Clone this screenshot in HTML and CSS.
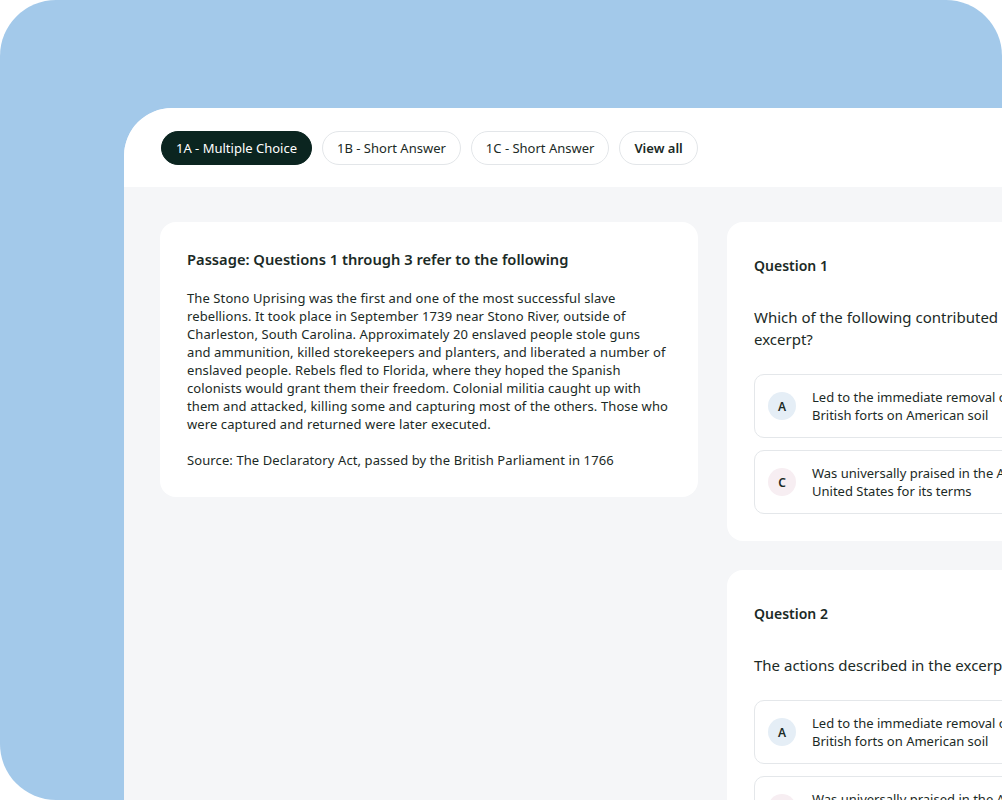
FILE: index.html
```html
<!DOCTYPE html>
<html>
<head>
<meta charset="utf-8">
<link rel="stylesheet" href="styles.css">
</head>
<body>
<div class="stage">
  <div class="frame">
    <div class="app">
      <div class="tabs">
        <button class="tab active">1A - Multiple Choice</button>
        <button class="tab">1B - Short Answer</button>
        <button class="tab">1C - Short Answer</button>
        <button class="tab strong">View all</button>
      </div>
      <div class="content">
        <div class="card passage">
          <h2 class="passage-title">Passage: Questions 1 through 3 refer to the following</h2>
          <p class="passage-text">The Stono Uprising was the first and one of the most successful slave<br>rebellions. It took place in September 1739 near Stono River, outside of<br>Charleston, South Carolina. Approximately 20 enslaved people stole guns<br>and ammunition, killed storekeepers and planters, and liberated a number of<br>enslaved people. Rebels fled to Florida, where they hoped the Spanish<br>colonists would grant them their freedom. Colonial militia caught up with<br>them and attacked, killing some and capturing most of the others. Those who<br>were captured and returned were later executed.</p>
          <p class="passage-text">Source: The Declaratory Act, passed by the British Parliament in 1766</p>
        </div>
        <div class="questions">
          <div class="card question">
            <h3 class="q-label">Question 1</h3>
            <p class="q-text">Which of the following contributed most directly to the events described in the<br>excerpt?</p>
            <div class="options">
              <div class="option"><span class="letter blue">A</span><span class="opt-text">Led to the immediate removal of all<br>British forts on American soil</span></div>
              <div class="option"><span class="letter pink">C</span><span class="opt-text">Was universally praised in the American<br>United States for its terms</span></div>
            </div>
          </div>
          <div class="card question">
            <h3 class="q-label">Question 2</h3>
            <p class="q-text">The actions described in the excerpt most directly reflect which of the following?</p>
            <div class="options">
              <div class="option"><span class="letter blue">A</span><span class="opt-text">Led to the immediate removal of all<br>British forts on American soil</span></div>
              <div class="option"><span class="letter pink">C</span><span class="opt-text">Was universally praised in the American<br>United States for its terms</span></div>
            </div>
          </div>
        </div>
      </div>
    </div>
  </div>
</div>
</body>
</html>
```

FILE: styles.css
```css
* { box-sizing: border-box; }
html, body { margin: 0; padding: 0; background: #ffffff; }
body { font-family: "Noto Sans", "Open Sans", "Liberation Sans", sans-serif; color: #1b2a26; }

.stage { width: 1002px; height: 800px; overflow: hidden; }

.frame {
  width: 1002px;
  height: 800px;
  background: #a3c9ea;
  border-radius: 56px;
  padding: 108px 0 0 124px;
}

.app {
  width: 1200px;
  height: 692px;
  background: #f5f6f8;
  border-top-left-radius: 48px;
  overflow: hidden;
}

.tabs {
  height: 79px;
  background: #ffffff;
  display: flex;
  align-items: flex-start;
  gap: 10px;
  padding: 23px 0 0 37px;
}

.tab {
  height: 34px;
  padding: 0 14px;
  border-radius: 17px;
  border: 1px solid #e3e6e9;
  background: #ffffff;
  color: #1b2a26;
  font-family: inherit;
  font-size: 13px;
  cursor: pointer;
}
.tab.active { background: #0b2520; border-color: #0b2520; color: #ffffff; }
.tab.strong { font-weight: 600; }

.content {
  display: grid;
  grid-template-columns: 538px 538px;
  gap: 29px;
  padding: 35px 36px;
  align-items: start;
}

.card {
  background: #ffffff;
  border-radius: 16px;
}

.passage { padding: 26px 18px 28px 27px; }
.passage-title { margin: 0 0 19px; font-size: 14.7px; font-weight: 600; line-height: 22px; }
.passage-text { margin: 0 0 18px; font-size: 13px; line-height: 18px; letter-spacing: 0.1px; white-space: nowrap; }
.passage-text:last-child { margin-bottom: 0; }

.questions { display: flex; flex-direction: column; gap: 29px; }
.question { padding: 33px 27px 27px; }
.q-label { margin: 0; font-size: 14px; font-weight: 600; line-height: 22px; }
.q-text { margin: 29px 0 0; font-size: 15px; line-height: 22px; white-space: nowrap; }

.options { display: flex; flex-direction: column; gap: 12px; margin-top: 24px; }
.option {
  height: 64px;
  border: 1px solid #e4e7ea;
  border-radius: 10px;
  display: flex;
  align-items: center;
  padding: 0 13px;
  gap: 16px;
}
.letter {
  width: 28px; height: 28px; border-radius: 50%;
  display: flex; align-items: center; justify-content: center;
  font-size: 12px; font-weight: 600; flex: none;
}
.letter.blue { background: #e5eef6; }
.letter.pink { background: #f7eef2; }
.opt-text { font-size: 13px; line-height: 18px; white-space: nowrap; }
```
